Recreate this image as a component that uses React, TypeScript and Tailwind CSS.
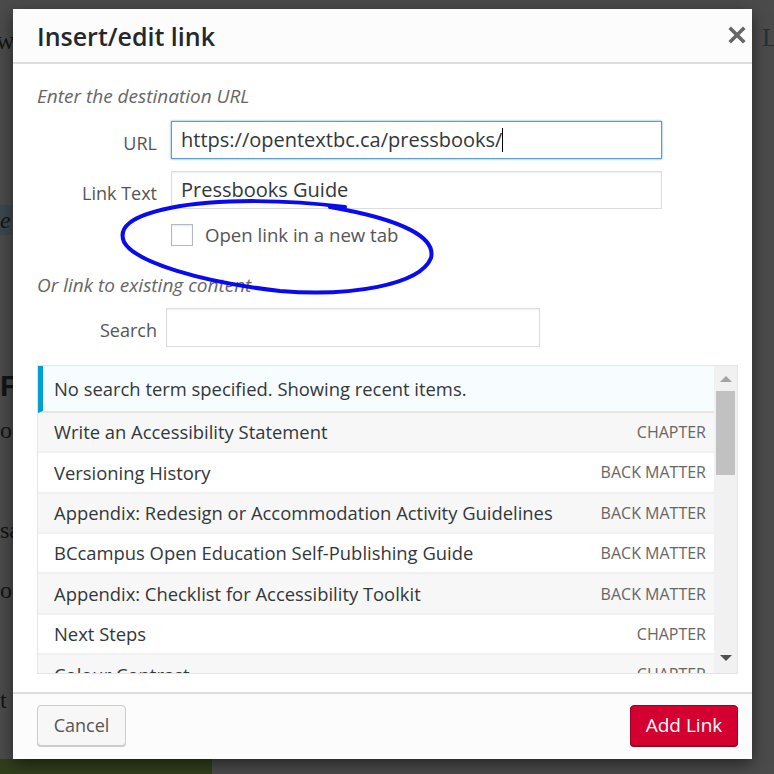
import React from 'react'

const rows: [string, string][] = [
  ['Write an Accessibility Statement', 'CHAPTER'],
  ['Versioning History', 'BACK MATTER'],
  ['Appendix: Redesign or Accommodation Activity Guidelines', 'BACK MATTER'],
  ['BCcampus Open Education Self-Publishing Guide', 'BACK MATTER'],
  ['Appendix: Checklist for Accessibility Toolkit', 'BACK MATTER'],
  ['Next Steps', 'CHAPTER'],
  ['Colour Contrast', 'CHAPTER'],
]

const ui = { fontFamily: '"Open Sans", "Noto Sans", sans-serif' }
const serif = { fontFamily: '"Liberation Serif", serif' }

function CloseIcon() {
  return (
    <svg width="18" height="18" viewBox="0 0 18 18">
      <path d="M3 3 L15 15 M15 3 L3 15" stroke="#666" strokeWidth="3.6" strokeLinecap="square" />
    </svg>
  )
}

function Field({ label, children }: { label: string; children: React.ReactNode }) {
  return (
    <div className="flex items-center">
      <span className="w-[120px] pt-[7px] text-right text-[18px] text-[#555]">{label}</span>
      {children}
    </div>
  )
}

function Backdrop() {
  return (
    <div className="flex h-full w-full" style={serif}>
      <div className="flex flex-col w-[212px] h-full text-[#141414]">
        <div className="h-[80px] flex items-center text-[26px] -ml-[4px]">w</div>
        <div className="h-[125px]" />
        <div className="h-[30px] w-[12px] bg-[#3b474d] flex items-center italic text-[24px]">e</div>
        <div className="h-[130px]" />
        <div className="h-[40px] flex items-center text-[30px] font-bold" style={{ fontFamily: '"Liberation Sans", sans-serif' }}>F</div>
        <div className="h-[50px] flex items-center text-[24px]">o:</div>
        <div className="h-[50px]" />
        <div className="h-[50px] flex items-center text-[24px]">sa</div>
        <div className="h-[10px]" />
        <div className="h-[50px] flex items-center text-[24px]">o</div>
        <div className="h-[65px]" />
        <div className="h-[40px] flex items-center text-[24px]">t</div>
        <div className="flex-1" />
        <div className="h-[15px] bg-[#313e1c]" />
      </div>
      <div className="flex-1" />
      <div className="w-[22px] flex flex-col">
        <div className="h-[74px] flex items-center pl-[10px] text-[26px] text-[#1c3441]">L</div>
      </div>
    </div>
  )
}

export default function App() {
  return (
    <div className="relative w-[774px] h-[774px] overflow-hidden bg-[#4b4b4b]">
      <Backdrop />

      <div
        className="absolute left-[13px] top-[9px] w-[739px] h-[750px] bg-white flex flex-col shadow-[0_5px_15px_rgba(0,0,0,0.5)]"
        style={ui}
      >
        {/* header */}
        <div className="h-[55px] shrink-0 bg-[#fcfcfc] border-b-2 border-[#dddddd] flex items-center justify-between pl-[24px] pr-[6px]">
          <h1 className="text-[25px] font-semibold text-[#23282d] leading-none pt-[2px]">Insert/edit link</h1>
          <span className="mb-[1px]">
            <CloseIcon />
          </span>
        </div>

        {/* body */}
        <div className="flex-1 flex flex-col pl-[24px] pr-[14px] pt-[21px]">
          <p className="h-[22px] leading-[22px] text-[19px] italic text-[#666]">Enter the destination URL</p>

          <div className="mt-[14px] flex flex-col gap-[12px]">
            <Field label="URL">
              <div className="ml-[14px] w-[491px] h-[38px] border border-[#5b9dd9] shadow-[0_0_2px_rgba(30,140,190,0.8)] bg-white flex items-center px-[9px] text-[20px] text-[#32373c]">
                <span>https://opentextbc.ca/pressbooks/</span>
                <span className="w-[1px] h-[24px] bg-black" />
              </div>
            </Field>
            <Field label="Link Text">
              <div className="ml-[14px] w-[491px] h-[38px] border border-[#dddddd] shadow-[inset_0_1px_2px_rgba(0,0,0,0.07)] bg-white flex items-center px-[9px] text-[20px] text-[#32373c]">
                Pressbooks Guide
              </div>
            </Field>
          </div>

          <label className="mt-[12px] ml-[134px] flex items-center gap-[12px]">
            <span className="w-[22px] h-[22px] border border-[#b4b9be] bg-white shadow-[inset_0_1px_2px_rgba(0,0,0,0.1)]" />
            <span className="text-[18.6px] text-[#555]">Open link in a new tab</span>
          </label>

          <p className="mt-[25px] h-[22px] leading-[22px] text-[19px] italic text-[#666]">Or link to existing content</p>

          <div className="mt-[12px]">
            <Field label="Search">
              <div className="ml-[9px] w-[374px] h-[39px] border border-[#dddddd] shadow-[inset_0_1px_2px_rgba(0,0,0,0.07)] bg-white" />
            </Field>
          </div>

          {/* results */}
          <div className="mt-[18px] h-[309px] border border-[#e5e5e5] flex overflow-hidden">
            <div className="flex-1 flex flex-col overflow-hidden">
              <div className="h-[47px] shrink-0 bg-[#f7fcfe] border-l-[5px] border-[#00a0d2] border-b-2 border-b-[#e5e5e5] flex items-center pl-[11px] text-[18.4px] text-[#32373c]">
                No search term specified. Showing recent items.
              </div>
              {rows.map(([title, kind], i) => (
                <div
                  key={title}
                  className={`h-[40.4px] shrink-0 border-b-2 border-[#f1f1f1] flex items-center justify-between pl-[16px] pr-[8px] ${
                    i % 2 === 0 ? 'bg-[#f7f7f7]' : 'bg-white'
                  }`}
                >
                  <span className="text-[18.4px] text-[#32373c]">{title}</span>
                  <span className="text-[16px] text-[#666] uppercase">{kind}</span>
                </div>
              ))}
            </div>
            <div className="w-[23px] shrink-0 bg-[#f1f1f1] flex flex-col items-center">
              <div className="h-[25px] flex items-center justify-center">
                <svg width="12" height="7" viewBox="0 0 12 7">
                  <path d="M0 7 L6 1 L12 7 Z" fill="#a3a3a3" />
                </svg>
              </div>
              <div className="w-[19px] h-[84px] bg-[#c1c1c1]" />
              <div className="flex-1" />
              <div className="h-[28px] flex items-center justify-center">
                <svg width="12" height="7" viewBox="0 0 12 7">
                  <path d="M0 0 L12 0 L6 6 Z" fill="#505050" />
                </svg>
              </div>
            </div>
          </div>
        </div>

        {/* footer */}
        <div className="h-[67px] shrink-0 bg-[#fcfcfc] border-t-2 border-[#dddddd] flex items-center justify-between pl-[24px] pr-[14px] pb-[2px]">
          <button className="w-[89px] h-[41px] rounded-[4px] border border-[#cccccc] bg-[#f7f7f7] shadow-[0_1px_0_#cccccc] text-[18px] text-[#555]">
            Cancel
          </button>
          <button className="w-[108px] h-[41px] rounded-[4px] border border-[#a00025] bg-[#d4002f] shadow-[0_1px_0_#8a001f] text-[19px] text-white">
            Add Link
          </button>
        </div>

        {/* hand-drawn annotation (page coordinates in viewBox) */}
        <svg className="absolute left-[82px] top-[174px] pointer-events-none" width="350" height="120" viewBox="95 183 350 120">
          <path
            d="M345 207 C 290 200, 220 198, 170 208 C 130 216, 118 228, 124 242 C 135 262, 200 282, 280 291 C 350 297, 420 285, 431 258 C 436 238, 405 220, 330 207"
            fill="none"
            stroke="#0a0af0"
            strokeWidth="4"
            strokeLinecap="round"
          />
        </svg>
      </div>
    </div>
  )
}
